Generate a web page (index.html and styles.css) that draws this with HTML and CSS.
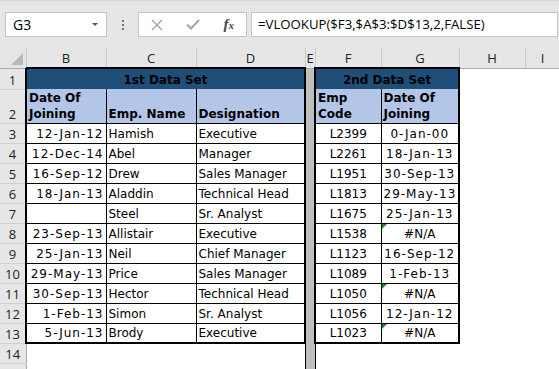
FILE: index.html
```html
<!DOCTYPE html>
<html lang="en">
<head>
    <meta charset="UTF-8">
    <title>VLOOKUP - Excel</title>
    <link rel="stylesheet" href="styles.css">
</head>
<body>
    <div class="toolbar">
        <div class="namebox">
            <span>G3</span>
            <span class="arrow"></span>
        </div>
        <div class="grip"><i></i><i></i><i></i></div>
        <div class="fbuttons">
            <svg width="12" height="12" viewBox="0 0 12 12"><path d="M1 1 L11 11 M11 1 L1 11" stroke="#a3a3a3" stroke-width="1.4" fill="none"/></svg>
            <svg width="14" height="11" viewBox="0 0 14 11"><path d="M1 5.5 L5 9.5 L13 1" stroke="#a3a3a3" stroke-width="2" fill="none"/></svg>
            <span class="fx"><i>f</i><i class="sub">x</i></span>
        </div>
        <div class="formula">=VLOOKUP($F3,$A$3:$D$13,2,FALSE)</div>
    </div>

    <table class="sheet">
        <colgroup>
            <col class="c-rh">
            <col class="c-b">
            <col class="c-c">
            <col class="c-d">
            <col class="c-e">
            <col class="c-f">
            <col class="c-g">
            <col class="c-h">
            <col class="c-i">
        </colgroup>
        <tr class="colheads">
            <th class="corner"><span></span></th>
            <th>B</th><th>C</th><th>D</th><th>E</th><th>F</th><th>G</th><th>H</th><th>I</th>
        </tr>
        <tr class="r1">
            <th class="rh">1</th>
            <td colspan="3" class="title lft rgt">1st Data Set</td>
            <td class="gap"></td>
            <td colspan="2" class="title lft rgt">2nd Data Set</td>
            <td class="blank"></td><td class="blank"></td>
        </tr>
        <tr class="r2">
            <th class="rh">2</th>
            <td class="hd lft">Date Of<br>Joining</td>
            <td class="hd">Emp. Name</td>
            <td class="hd rgt">Designation</td>
            <td class="gap"></td>
            <td class="hd lft">Emp<br>Code</td>
            <td class="hd rgt">Date Of<br>Joining</td>
            <td class="blank"></td><td class="blank"></td>
        </tr>
        <tr>
            <th class="rh">3</th>
            <td class="date lft">12-Jan-12</td><td>Hamish</td><td class="rgt">Executive</td>
            <td class="gap"></td>
            <td class="code lft">L2399</td><td class="date mid rgt">0-Jan-00</td>
            <td class="blank"></td><td class="blank"></td>
        </tr>
        <tr>
            <th class="rh">4</th>
            <td class="date lft">12-Dec-14</td><td>Abel</td><td class="rgt">Manager</td>
            <td class="gap"></td>
            <td class="code lft">L2261</td><td class="date mid rgt">18-Jan-13</td>
            <td class="blank"></td><td class="blank"></td>
        </tr>
        <tr>
            <th class="rh">5</th>
            <td class="date lft">16-Sep-12</td><td>Drew</td><td class="rgt">Sales Manager</td>
            <td class="gap"></td>
            <td class="code lft">L1951</td><td class="date mid rgt">30-Sep-13</td>
            <td class="blank"></td><td class="blank"></td>
        </tr>
        <tr>
            <th class="rh">6</th>
            <td class="date lft">18-Jan-13</td><td>Aladdin</td><td class="rgt">Technical Head</td>
            <td class="gap"></td>
            <td class="code lft">L1813</td><td class="date mid rgt">29-May-13</td>
            <td class="blank"></td><td class="blank"></td>
        </tr>
        <tr>
            <th class="rh">7</th>
            <td class="date lft"></td><td>Steel</td><td class="rgt">Sr. Analyst</td>
            <td class="gap"></td>
            <td class="code lft">L1675</td><td class="date mid rgt">25-Jan-13</td>
            <td class="blank"></td><td class="blank"></td>
        </tr>
        <tr>
            <th class="rh">8</th>
            <td class="date lft">23-Sep-13</td><td>Allistair</td><td class="rgt">Executive</td>
            <td class="gap"></td>
            <td class="code lft">L1538</td><td class="mid rgt err">#N/A</td>
            <td class="blank"></td><td class="blank"></td>
        </tr>
        <tr>
            <th class="rh">9</th>
            <td class="date lft">25-Jan-13</td><td>Neil</td><td class="rgt">Chief Manager</td>
            <td class="gap"></td>
            <td class="code lft">L1123</td><td class="date mid rgt">16-Sep-12</td>
            <td class="blank"></td><td class="blank"></td>
        </tr>
        <tr>
            <th class="rh">10</th>
            <td class="date lft">29-May-13</td><td>Price</td><td class="rgt">Sales Manager</td>
            <td class="gap"></td>
            <td class="code lft">L1089</td><td class="date mid rgt">1-Feb-13</td>
            <td class="blank"></td><td class="blank"></td>
        </tr>
        <tr>
            <th class="rh">11</th>
            <td class="date lft">30-Sep-13</td><td>Hector</td><td class="rgt">Technical Head</td>
            <td class="gap"></td>
            <td class="code lft">L1050</td><td class="mid rgt err">#N/A</td>
            <td class="blank"></td><td class="blank"></td>
        </tr>
        <tr>
            <th class="rh">12</th>
            <td class="date lft">1-Feb-13</td><td>Simon</td><td class="rgt">Sr. Analyst</td>
            <td class="gap"></td>
            <td class="code lft">L1056</td><td class="date mid rgt">12-Jan-12</td>
            <td class="blank"></td><td class="blank"></td>
        </tr>
        <tr class="last">
            <th class="rh">13</th>
            <td class="date lft">5-Jun-13</td><td>Brody</td><td class="rgt">Executive</td>
            <td class="gap"></td>
            <td class="code lft">L1023</td><td class="mid rgt err">#N/A</td>
            <td class="blank"></td><td class="blank"></td>
        </tr>
        <tr class="empty">
            <th class="rh">14</th>
            <td class="blank"></td><td class="blank"></td><td class="blank"></td>
            <td class="gap"></td>
            <td class="blank"></td><td class="blank"></td><td class="blank"></td><td class="blank"></td>
        </tr>
        <tr class="empty">
            <th class="rh"></th>
            <td class="blank"></td><td class="blank"></td><td class="blank"></td>
            <td class="gap"></td>
            <td class="blank"></td><td class="blank"></td><td class="blank"></td><td class="blank"></td>
        </tr>
    </table>
</body>
</html>
```

FILE: styles.css
```css
body {
    margin: 0;
    background-color: white;
    font-family: "DejaVu Sans", sans-serif;
    overflow: hidden;
}

/* formula bar */
.toolbar {
    display: flex;
    align-items: center;
    height: 48px;
    padding: 0 1px 0 5px;
    box-sizing: border-box;
    background-color: #e6e6e6;
    border-top: 1px solid #d9d9d9;
    font-family: "Open Sans", "Noto Sans", sans-serif;
    font-size: 13px;
    color: #000;
}
.namebox {
    display: flex;
    align-items: center;
    justify-content: space-between;
    width: 102px;
    height: 25px;
    padding: 0 8px 0 7px;
    box-sizing: border-box;
    font-size: 14px;
    background-color: white;
    border: 1px solid #c6c6c6;
}
.arrow {
    width: 0;
    height: 0;
    border-left: 3px solid transparent;
    border-right: 3px solid transparent;
    border-top: 3px solid #555;
}
.grip {
    display: flex;
    flex-direction: column;
    gap: 2px;
    width: 31px;
    align-items: center;
}
.grip i {
    display: block;
    width: 2px;
    height: 2px;
    background-color: #777;
}
.fbuttons {
    display: flex;
    align-items: center;
    justify-content: space-between;
    width: 109px;
    height: 25px;
    padding: 0 12px 0 12px;
    box-sizing: border-box;
    background-color: white;
    border: 1px solid #c6c6c6;
}
.fx {
    font-family: "Liberation Serif", serif;
    font-size: 15px;
    color: #444;
    font-weight: bold;
}
.fx .sub {
    font-size: 11px;
}
.formula {
    flex: 1;
    height: 25px;
    margin-left: 4px;
    padding-left: 6px;
    box-sizing: border-box;
    line-height: 23px;
    font-size: 13.2px;
    background-color: white;
    border: 1px solid #c6c6c6;
    white-space: nowrap;
    overflow: hidden;
}

/* sheet grid */
.sheet {
    border-collapse: collapse;
    table-layout: fixed;
    width: 560px;
}
.c-rh { width: 26px; }
.c-b { width: 80px; }
.c-c { width: 90px; }
.c-d { width: 109px; }
.c-e { width: 10px; }
.c-f { width: 66px; }
.c-g { width: 78px; }
.c-h { width: 66px; }
.c-i { width: 35px; }

.sheet tr { height: 20px; }
.sheet tr.r1 { height: 21px; }
.sheet tr.r2 { height: 34px; }

.sheet td {
    padding: 0 2px 2px 2px;
    font-size: 12px;
    line-height: 14px;
    vertical-align: bottom;
    white-space: nowrap;
    overflow: hidden;
    border: 1px solid #000;
    color: #000;
}

.colheads th {
    height: 19px;
    padding: 0;
    background-color: #e6e6e6;
    font-family: "Open Sans", "Noto Sans", sans-serif;
    font-weight: normal;
    font-size: 13px;
    color: #222;
    border-left: 1px solid #c8c8c8;
    border-right: 1px solid #c8c8c8;
    border-bottom: 1px solid #ababab;
}
.colheads th.corner {
    position: relative;
    border-left: none;
}
.corner span {
    position: absolute;
    right: 3px;
    bottom: 3px;
    width: 0;
    height: 0;
    border-left: 12px solid transparent;
    border-bottom: 12px solid #b9b9b9;
}

.sheet th.rh {
    padding: 0;
    background-color: #e6e6e6;
    font-family: "Open Sans", "Noto Sans", sans-serif;
    font-weight: normal;
    font-size: 13px;
    line-height: 18px;
    vertical-align: bottom;
    color: #222;
    text-align: center;
    border-bottom: 1px solid #d0d0d0;
    border-right: 1px solid #ababab;
}

.sheet td.lft { border-left-width: 2px; }
.sheet td.rgt { border-right-width: 2px; }
.sheet tr.last td { border-bottom-width: 2px; }
.sheet tr.empty td { border-top-width: 0; }

.title {
    background-color: #1f4e79;
    color: white;
    font-weight: bold;
    text-align: center;
    border-top-width: 2px !important;
    border-bottom: none !important;
}
.hd {
    background-color: #b4c6e7;
    font-weight: bold;
    line-height: 16px !important;
    padding-bottom: 1px !important;
    border-top: none !important;
}

.sheet td.gap {
    background-color: #bfbfbf;
    border-top: none;
    border-bottom: none;
    padding: 0;
}
.sheet td.blank {
    border: none;
    padding: 0;
}

.date {
    text-align: right;
    letter-spacing: 1px;
}
.code { text-align: center; }
.mid { text-align: center; }

.err {
    position: relative;
}
.err::before {
    content: "";
    position: absolute;
    left: 0;
    top: 0;
    width: 0;
    height: 0;
    border-top: 5px solid #1e8c1e;
    border-right: 5px solid transparent;
}
```
